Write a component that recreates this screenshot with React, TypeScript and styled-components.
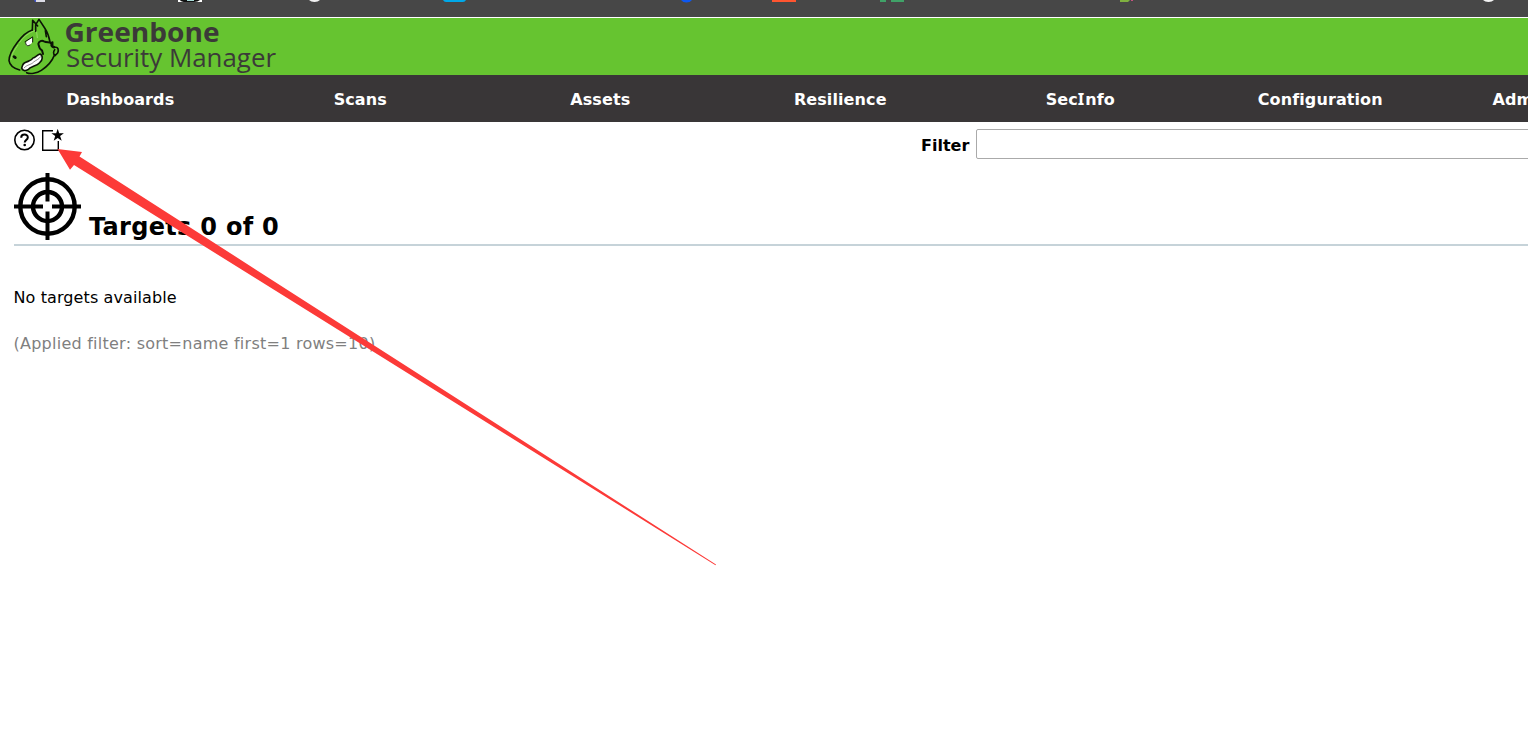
import React from 'react';
import styled, { createGlobalStyle } from 'styled-components';

const GlobalStyle = createGlobalStyle`
  * { box-sizing: border-box; }
  html, body { margin: 0; background: #fff; overflow: hidden; }
  body { font-family: Verdana, "DejaVu Sans", sans-serif; font-size: 16px; color: #000; }
`;

const Page = styled.div`
  position: relative;
  width: 100%;
  height: 729px;
  overflow: hidden;
`;
const BookmarkStrip = styled.div`
  height: 17px;
  background: #474747;
  svg { display: block; }
`;
const Header = styled.header`
  height: 58px;
  border-top: 1px solid #fff;
  background: #66c430;
  svg { display: block; }
`;
const Nav = styled.nav`
  display: flex;
  height: 47px;
  background: #393637;
`;
const NavItem = styled.a`
  flex: 0 0 240px;
  padding-left: 0.5px;
  text-align: center;
  line-height: 49px;
  font-weight: bold;
  color: #fff;
  letter-spacing: 0.1px;
`;
const SerifCap = styled.span`
  font-family: "Noto Sans", sans-serif;
  font-size: 16.5px;
  letter-spacing: 1px;
  line-height: 1;
`;
const Toolbar = styled.div`
  display: flex;
  justify-content: space-between;
  height: 51px;
  padding: 7px 0 0 14px;
`;
const ToolIcons = styled.div`
  display: flex;
  gap: 5px;
  svg { display: block; }
`;
const FilterBox = styled.label`
  display: flex;
  flex: 0 0 607px;
  min-width: 0;
  gap: 7px;
  font-weight: bold;
  line-height: 33px;
`;
const FilterLabel = styled.span`
  flex: 0 0 48px;
`;
const FilterInput = styled.input`
  width: 620px;
  flex: none;
  height: 30px;
  border: 1px solid #aaa;
  border-radius: 2px;
  background: #fff;
`;
const Section = styled.section`
  margin-left: 14px;
`;
const SectionHeader = styled.div`
  display: flex;
  align-items: flex-end;
  gap: 8px;
  height: 73px;
  padding-bottom: 4px;
  border-bottom: 2px solid #c6d3d9;
  svg { display: block; flex: none; }
`;
const Title = styled.h2`
  margin: 0;
  font-size: 24px;
  line-height: 26px;
  letter-spacing: 0.3px;
  white-space: pre;
`;
const Empty = styled.p`
  margin: 42px 0 0 -0.5px;
  line-height: 20px;
  letter-spacing: 0.1px;
`;
const Applied = styled.p`
  margin: 26px 0 0 -0.5px;
  line-height: 20px;
  letter-spacing: 0.25px;
  color: #7f7f7f;
`;
const Pointer = styled.svg`
  position: absolute;
  left: 0;
  top: 0;
  pointer-events: none;
`;

const Bookmarks = () => (
  <svg width="1528" height="17">
    <path d="M34 0h3v2h-2z" fill="#4054c8" />
    <path d="M36 0h9v2h-9z" fill="#dcdce6" />
    <path d="M178 0h24v2h-24z" fill="#fff" />
    <path d="M180 0h20q-2 2-6 2h-8q-5 0-6-2z" fill="#111" />
    <path d="M187 0h7v1h-7z" fill="#a9dcd8" />
    <path d="M309 0h11q-2 2-5.500 2T309 0z" fill="#f2f2f2" />
    <path d="M443 0h23q-1 2-3 2h-17q-2 0-3-2z" fill="#00a8e8" />
    <path d="M681 0h11q-2 2.500-5.500 2.500T681 0z" fill="#0d58f2" />
    <path d="M772 0h24v2h-24z" fill="#ff5530" />
    <path d="M880 0h6v2h-6zM891 0h13v2h-13z" fill="#40a268" />
    <path d="M1120 0h10l-2 2h-8z" fill="#80b040" />
    <path d="M1131 0h2v1h-2z" fill="#c65380" />
    <path d="M1483 0h11q-2 2-5.500 2T1483 0z" fill="#f4f4f4" />
  </svg>
);

const Logo = () => (
  <svg width="300" height="57" viewBox="0 18 300 57">
    <g transform="translate(0 10) scale(.33333)" fill="none" stroke="#0c1406" strokeWidth="4.800" strokeLinejoin="round" strokeLinecap="round">
      <path d="M97 60C78 66 65 80 53 96C40 113 27 132 27 152C29 166 40 175 59 180" />
      <path d="M97 60L98 31L113 48M107 64L107 44L117 28L134 54C144 69 147 80 150 96M136 62L139 80" />
      <path d="M104 62C84 69 69 82 59 97M54 105C43 121 34 134 33 149M110 66L112 83" stroke="#96dc60" strokeWidth="3" />
      <path d="M115 101C117 94 125 90 132 94C142 99 150 94 154 101C153 109 158 113 163 112M115 101C117 110 117 117 126 121L129 132" strokeWidth="6" />
      <path d="M153 98L158 96L158 107L165 112C174 110 177 119 173 129L165 137C159 133 160 124 164 119M164 134C155 157 143 169 124 181C110 190 91 193 80 188" />
      <path d="M65 174C68 168 66 164 73 159C83 153 95 153 99 144C106 143 111 135 120 132C130 137 128 151 119 158C109 169 92 169 84 179C76 185 67 181 65 174Z" fill="#fff" />
      <path d="M72 174C83 162 92 166 101 156C108 150 116 149 122 140" stroke="#555" strokeWidth="2" />
      <path d="M77 97L97 82C101 92 96 105 83 108C77 107 76 101 77 97Z" fill="#fff" stroke="none" />
      <path d="M75 95L98 81M77 98C77 106 82 110 90 105M98 83L98 96" strokeWidth="3" />
      <path d="M42 140L46 143" strokeWidth="8" />
    </g>
    <g fill="#3b3a38" fontFamily="'Open Sans', sans-serif">
      <text x="64.500" y="41.500" fontSize="27.500" fontWeight="700" textLength="155" lengthAdjust="spacingAndGlyphs">Greenbone</text>
      <text x="66" y="67" fontSize="25.500" textLength="210" lengthAdjust="spacingAndGlyphs">Security Manager</text>
    </g>
  </svg>
);

const HelpIcon = () => (
  <svg width="22" height="22" viewBox="0 0 22 22" fill="none" stroke="#000">
    <circle cx="10.500" cy="11" r="9.700" strokeWidth="1.600" />
    <path d="M7.200 8.700C7.200 4.500 13.900 4.600 13.800 8.500C13.800 11 10.700 10.700 10.700 13.500" strokeWidth="2" />
    <circle cx="10.700" cy="16" r="1.300" fill="#000" stroke="none" />
  </svg>
);

const NewIcon = () => (
  <svg width="24" height="23" viewBox="41 129 24 23">
    <path d="M53 130.700H42.700V150.300H58.300V141" fill="none" stroke="#000" strokeWidth="1.400" />
    <path d="M57.700 128.800L59.200 133.300H63.900L60.100 136L61.700 140.700L57.700 137.900L53.700 140.700L55.200 136L51.400 133.300H56.200Z" />
  </svg>
);

const TargetIcon = () => (
  <svg width="67" height="67" viewBox="0 0 67 67" fill="none" stroke="#000">
    <circle cx="33.500" cy="33.500" r="27.200" strokeWidth="4.400" />
    <circle cx="33.500" cy="33.500" r="14.500" strokeWidth="4.400" />
    <path d="M33.500 0V28.500M33.500 38.500V67M0 33.500H29M38 33.500H67" strokeWidth="4" />
  </svg>
);

export default function App() {
  return (
    <Page>
      <GlobalStyle />
      <BookmarkStrip><Bookmarks /></BookmarkStrip>
      <Header><Logo /></Header>
      <Nav>
        <NavItem>Dashboards</NavItem>
        <NavItem>Scans</NavItem>
        <NavItem>Assets</NavItem>
        <NavItem>Resilience</NavItem>
        <NavItem>Sec<SerifCap>I</SerifCap>nfo</NavItem>
        <NavItem>Configuration</NavItem>
        <NavItem>Administration</NavItem>
      </Nav>
      <Toolbar>
        <ToolIcons><HelpIcon /><NewIcon /></ToolIcons>
        <FilterBox>
          <FilterLabel>Filter</FilterLabel>
          <FilterInput aria-label="Filter" />
        </FilterBox>
      </Toolbar>
      <Section>
        <SectionHeader>
          <TargetIcon />
          <Title>Targets 0 of 0</Title>
        </SectionHeader>
        <Empty>No targets available</Empty>
        <Applied>(Applied filter: sort=name first=1 rows=10)</Applied>
      </Section>
      <Pointer width="1528" height="729">
        <path d="M57.500 149L82 152L79.500 156.500L716 564.600L715.500 565.200L74 165L70 169.700Z" fill="#fc3a38" />
      </Pointer>
    </Page>
  );
}
